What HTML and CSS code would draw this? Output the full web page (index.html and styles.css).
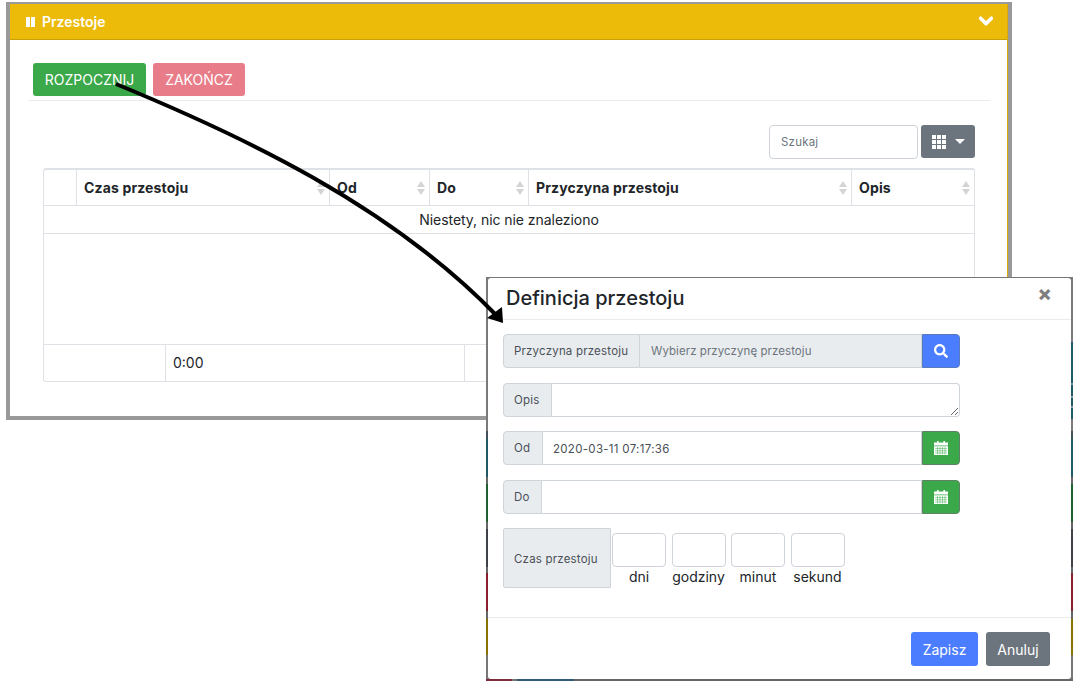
FILE: index.html
```html
<!DOCTYPE html>
<html lang="pl">

<head>
    <meta charset="UTF-8">
    <meta name="viewport" content="width=device-width, initial-scale=1.0">
    <title>Przestoje</title>
    <link rel="stylesheet" href="styles.css">
</head>

<body>
    <div class="frame">
        <div class="card">
            <div class="card-header">
                <svg class="icon-pause" viewBox="0 0 9 10"><rect x="0" y="0" width="4" height="10" rx="0.6" /><rect x="5" y="0" width="4" height="10" rx="0.6" /></svg>
                <span class="card-title">Przestoje</span>
                <svg class="icon-chevron" viewBox="0 0 448 512"><path d="M207.029 381.476L12.686 187.132c-9.373-9.373-9.373-24.569 0-33.941l22.667-22.667c9.357-9.357 24.522-9.375 33.901-.04L224 284.505l154.745-154.021c9.379-9.335 24.544-9.317 33.901.04l22.667 22.667c9.373 9.373 9.373 24.569 0 33.941L240.971 381.476c-9.373 9.372-24.569 9.372-33.942 0z" /></svg>
            </div>
            <div class="toolbar">
                <button class="btn btn-start">ROZPOCZNIJ</button>
                <button class="btn btn-stop">ZAKOŃCZ</button>
            </div>
            <div class="section">
                <div class="search-row">
                    <input class="search" type="text" placeholder="Szukaj">
                    <button class="btn-columns">
                        <svg class="icon-th" viewBox="0 0 14 14"><path d="M0 0h4v4H0zM5 0h4v4H5zM10 0h4v4h-4zM0 5h4v4H0zM5 5h4v4H5zM10 5h4v4h-4zM0 10h4v4H0zM5 10h4v4H5zM10 10h4v4h-4z" /></svg>
                        <span class="caret"></span>
                    </button>
                </div>
                <div class="grid-table">
                    <div class="grid-head">
                        <div class="th"></div>
                        <div class="th"><span>Czas przestoju</span><svg class="sort" viewBox="0 0 8 14"><path d="M4 0l4 6H0zM4 14l4-6H0z" /></svg></div>
                        <div class="th"><span>Od</span><svg class="sort" viewBox="0 0 8 14"><path d="M4 0l4 6H0zM4 14l4-6H0z" /></svg></div>
                        <div class="th"><span>Do</span><svg class="sort" viewBox="0 0 8 14"><path d="M4 0l4 6H0zM4 14l4-6H0z" /></svg></div>
                        <div class="th"><span>Przyczyna przestoju</span><svg class="sort" viewBox="0 0 8 14"><path d="M4 0l4 6H0zM4 14l4-6H0z" /></svg></div>
                        <div class="th"><span>Opis</span><svg class="sort" viewBox="0 0 8 14"><path d="M4 0l4 6H0zM4 14l4-6H0z" /></svg></div>
                    </div>
                    <div class="empty-row">Niestety, nic nie znaleziono</div>
                    <div class="table-space"></div>
                    <div class="grid-foot">
                        <div class="td"></div>
                        <div class="td">0:00</div>
                        <div class="td"></div>
                    </div>
                </div>
            </div>
        </div>
    </div>

    <div class="modal-edge">
        <div class="modal">
            <div class="modal-header">
                <h5 class="modal-title">Definicja przestoju</h5>
                <span class="close">×</span>
            </div>
            <div class="modal-body">
                <div class="input-group">
                    <span class="addon addon-reason">Przyczyna przestoju</span>
                    <input class="control control-readonly" type="text" placeholder="Wybierz przyczynę przestoju" readonly>
                    <button class="btn-side btn-search">
                        <svg class="icon" viewBox="0 0 512 512"><path d="M505 442.7L405.3 343c-4.5-4.5-10.6-7-17-7H372c27.6-35.3 44-79.7 44-128C416 93.1 322.9 0 208 0S0 93.1 0 208s93.1 208 208 208c48.3 0 92.7-16.4 128-44v16.3c0 6.4 2.5 12.5 7 17l99.7 99.7c9.4 9.4 24.6 9.4 33.9 0l28.3-28.3c9.4-9.4 9.4-24.6.1-34zM208 336c-70.7 0-128-57.2-128-128 0-70.7 57.2-128 128-128 70.7 0 128 57.2 128 128 0 70.7-57.2 128-128 128z" /></svg>
                    </button>
                </div>
                <div class="input-group">
                    <span class="addon addon-opis">Opis</span>
                    <textarea class="control control-last"></textarea>
                </div>
                <div class="input-group">
                    <span class="addon addon-od">Od</span>
                    <input class="control control-date" type="text" value="2020-03-11 07:17:36">
                    <button class="btn-side btn-date">
                        <svg class="icon" viewBox="0 0 14 14"><path d="M3 0h1.6v1.5h4.8V0H11v1.5h3v3H0v-3h3zM0 5.2h14V14H0z" /><path class="cal-lines" d="M1 7.6h12M1 9.8h12M1 12h12M3.5 6v7.4M6 6v7.4M8.5 6v7.4M11 6v7.4" /></svg>
                    </button>
                </div>
                <div class="input-group">
                    <span class="addon addon-do">Do</span>
                    <input class="control" type="text">
                    <button class="btn-side btn-date">
                        <svg class="icon" viewBox="0 0 14 14"><path d="M3 0h1.6v1.5h4.8V0H11v1.5h3v3H0v-3h3zM0 5.2h14V14H0z" /><path class="cal-lines" d="M1 7.6h12M1 9.8h12M1 12h12M3.5 6v7.4M6 6v7.4M8.5 6v7.4M11 6v7.4" /></svg>
                    </button>
                </div>
                <div class="duration">
                    <span class="addon addon-duration">Czas przestoju</span>
                    <div class="duration-fields">
                        <label class="field"><input class="field-input" type="text">dni</label>
                        <label class="field"><input class="field-input" type="text">godziny</label>
                        <label class="field"><input class="field-input" type="text">minut</label>
                        <label class="field"><input class="field-input" type="text">sekund</label>
                    </div>
                </div>
            </div>
            <div class="modal-footer">
                <button class="btn btn-save">Zapisz</button>
                <button class="btn btn-cancel">Anuluj</button>
            </div>
        </div>
    </div>

    <svg class="arrow" viewBox="0 0 1080 687">
        <path d="M116 84C240 135 390 205 497 316" fill="none" stroke="#000" stroke-width="4" />
        <path d="M503 323L487 318L502 307z" />
    </svg>
</body>

</html>
```

FILE: styles.css
```css
* {
    box-sizing: border-box;
}

body {
    font-family: Inter, "Liberation Sans", sans-serif;
    font-size: 14px;
    color: #212529;
    background: #fff;
    margin: 0;
    padding: 2px 0 0 6px;
    height: 687px;
    overflow: hidden;
}

/* panel behind the dialog */
.frame {
    width: 1006px;
    height: 418px;
    border: 4px solid #999;
    border-top-width: 2px;
}

.card {
    height: 100%;
    border-right: 1px solid #d9a90a;
}

.card-header {
    display: flex;
    align-items: center;
    height: 36px;
    padding: 0 14px 0 16px;
    background: #ecbb0a;
    border-bottom: 1px solid #c9a008;
    color: #fff;
}

.icon-pause {
    width: 9px;
    height: 10px;
    fill: #fff;
}

.card-title {
    margin-left: 7px;
    font-size: 14px;
    font-weight: 600;
}

.icon-chevron {
    width: 14px;
    height: 16px;
    margin-left: auto;
    margin-top: -2px;
    fill: #fff;
    stroke: #fff;
    stroke-width: 36;
}

.toolbar {
    display: flex;
    gap: 7px;
    margin: 23px 17px 0 18px;
    padding: 0 5px 4px;
    border-bottom: 1px solid #e9ecef;
}

.btn {
    height: 33px;
    padding: 0 11px;
    border: none;
    border-radius: 3px;
    color: #fff;
    font-family: inherit;
    font-size: 14px;
}

.btn-start {
    width: 113px;
    background: #3ba84a;
}

.btn-stop {
    width: 92px;
    background: #e87c88;
}

.section {
    margin: 24px 32px 0 33px;
}

.search-row {
    display: flex;
    justify-content: flex-end;
    gap: 3px;
    height: 34px;
}

.search {
    width: 149px;
    height: 34px;
    padding: 0 11px;
    border: 1px solid #ced4da;
    border-radius: 4px;
    font-family: inherit;
    font-size: 11.5px;
    letter-spacing: 0.2px;
}

.search::placeholder {
    color: #6c757d;
}

.btn-columns {
    display: flex;
    align-items: center;
    justify-content: center;
    gap: 9px;
    width: 54px;
    height: 33px;
    border: none;
    border-radius: 3px;
    background: #6c757d;
}

.icon-th {
    width: 14px;
    height: 14px;
    fill: #fff;
}

.caret {
    border-top: 5px solid #fff;
    border-left: 5px solid transparent;
    border-right: 5px solid transparent;
}

.grid-table {
    margin-top: 9px;
    height: 214px;
    display: flex;
    flex-direction: column;
    border: 1px solid #dee2e6;
    border-top-width: 2px;
    border-radius: 3px;
}

.grid-head {
    display: grid;
    grid-template-columns: 32px 253px 100px 99px 323px 1fr;
    height: 36px;
    border-bottom: 1px solid #dee2e6;
}

.th {
    display: flex;
    align-items: center;
    justify-content: space-between;
    padding: 0 4px 0 7px;
    border-left: 1px solid #dee2e6;
    font-weight: 700;
    font-size: 14px;
    letter-spacing: 0.15px;
}

.th:first-child {
    border-left: none;
}

.sort {
    width: 8px;
    height: 14px;
    fill: #d4d4d4;
}

.empty-row {
    height: 28px;
    line-height: 28px;
    text-align: center;
    letter-spacing: -0.05px;
    border-bottom: 1px solid #dee2e6;
}

.table-space {
    flex: 1;
    border-bottom: 1px solid #dee2e6;
}

.grid-foot {
    display: grid;
    grid-template-columns: 121px 299px 1fr;
    height: 36px;
}

.td {
    line-height: 36px;
    padding-left: 7px;
    border-left: 1px solid #dee2e6;
}

.td:first-child {
    border-left: none;
}

/* drawn over the screenshot */
.arrow {
    position: absolute;
    left: 0;
    top: 0;
    width: 1080px;
    height: 687px;
    pointer-events: none;
}

.modal-edge {
    position: absolute;
    left: 486px;
    top: 277px;
    width: 587px;
    height: 404px;
    padding: 1px 2px 2px;
    background:
        linear-gradient(90deg, #7d2c3a 26px, #777 26px, #777 31px, #2f5a78 31px, #2f5a78 88px, #666 88px) bottom / 100% 2px no-repeat,
        linear-gradient(180deg, #7a7a7a 154px, #44505a 154px, #44505a 162px, #1f5a68 162px, #1f5a68 200px, #666 200px, #666 207px, #1f6030 207px, #1f6030 245px, #666 245px, #666 252px, #3e4248 252px, #3e4248 290px, #666 290px, #666 296px, #8a1f30 296px, #8a1f30 334px, #666 334px, #666 342px, #8a7200 342px, #8a7200 378px, #777 378px) left / 2px 100% no-repeat,
        linear-gradient(180deg, #7a7a7a 65px, #1f5a68 65px, #1f5a68 106px, #8a9aa0 106px, #8a9aa0 108px, #1f5a68 108px, #1f5a68 119px, #8a9aa0 119px, #8a9aa0 121px, #1f5a68 121px, #1f5a68 129px, #8a9aa0 129px, #8a9aa0 131px, #1f5a68 131px, #1f5a68 142px, #7a7a7a 142px, #7a7a7a 154px, #44505a 154px, #44505a 162px, #1f5a68 162px, #1f5a68 200px, #666 200px, #666 207px, #1f6030 207px, #1f6030 245px, #666 245px, #666 252px, #3e4248 252px, #3e4248 290px, #666 290px, #666 296px, #8a1f30 296px, #8a1f30 334px, #666 334px, #666 342px, #8a7200 342px, #8a7200 378px, #777 378px) right / 2px 100% no-repeat,
        #777;
}

.modal {
    display: flex;
    flex-direction: column;
    height: 100%;
    background: #fff;
    border-radius: 3px;
}

.modal-header {
    display: flex;
    align-items: center;
    justify-content: space-between;
    height: 42px;
    padding: 0 19px 2px 18px;
    border-bottom: 1px solid #e9ecef;
}

.modal-title {
    margin: 0;
    font-size: 20px;
    font-weight: 500;
}

.close {
    font-size: 21px;
    font-weight: 800;
    line-height: 1;
    color: #7f7f7f;
    margin-top: -8px;
}

.modal-body {
    flex: 1;
    padding: 14px 15px 0;
}

.input-group {
    display: flex;
    width: 457px;
    height: 34px;
    margin-bottom: 14.5px;
}

.addon {
    display: flex;
    align-items: center;
    padding-left: 10px;
    flex-shrink: 0;
    background: #e9ecef;
    border: 1px solid #ced4da;
    border-radius: 4px 0 0 4px;
    color: #495057;
    font-size: 11.5px;
    letter-spacing: 0.2px;
}

.addon-reason {
    width: 137px;
}

.addon-opis {
    width: 49px;
}

.addon-od {
    width: 40px;
}

.addon-do {
    width: 39px;
}

.addon-duration {
    width: 108px;
    height: 60px;
    padding-top: 1px;
    border-radius: 2px 0 0 2px;
}

.control {
    flex: 1;
    min-width: 0;
    height: 34px;
    padding: 0 11px;
    border: 1px solid #ced4da;
    border-left: none;
    font-family: inherit;
    font-size: 11.5px;
    letter-spacing: 0.3px;
    color: #495057;
}

.control-readonly {
    background: #e9ecef;
    letter-spacing: 0.07px;
}

.control-readonly::placeholder {
    color: #6c757d;
}

.control-last {
    border-radius: 0 4px 4px 0;
}

.control-date {
    padding: 2px 10px 0;
}

.btn-side {
    display: flex;
    align-items: center;
    justify-content: center;
    width: 38px;
    height: 34px;
    border: 1px solid #6c757d;
    border-radius: 0 4px 4px 0;
    padding: 0;
}

.btn-search {
    background: #4a7dff;
    border-color: #5a7ac0;
}

.btn-date {
    background: #3ba84a;
    border-color: #5f8266;
}

.icon {
    width: 14px;
    height: 14px;
    fill: #fff;
}

.cal-lines {
    fill: none;
    stroke: #3ba84a;
    stroke-width: 0.5;
}

.duration {
    display: flex;
    height: 60px;
}

.duration-fields {
    display: flex;
    gap: 5.5px;
    margin-left: 1px;
    padding-top: 5px;
}

.field {
    display: flex;
    flex-direction: column;
    align-items: center;
    width: 54px;
    font-size: 14px;
    line-height: 20px;
}

.field-input {
    width: 54px;
    height: 34px;
    border: 1px solid #ced4da;
    border-radius: 4px;
}

.modal-footer {
    display: flex;
    justify-content: flex-end;
    gap: 8px;
    height: 62px;
    padding: 14px 21px 0 0;
    border-top: 1px solid #e9ecef;
}

.btn-save {
    width: 67px;
    height: 34px;
    background: #4a7dff;
}

.btn-cancel {
    width: 64px;
    height: 34px;
    background: #6c757d;
}
```
